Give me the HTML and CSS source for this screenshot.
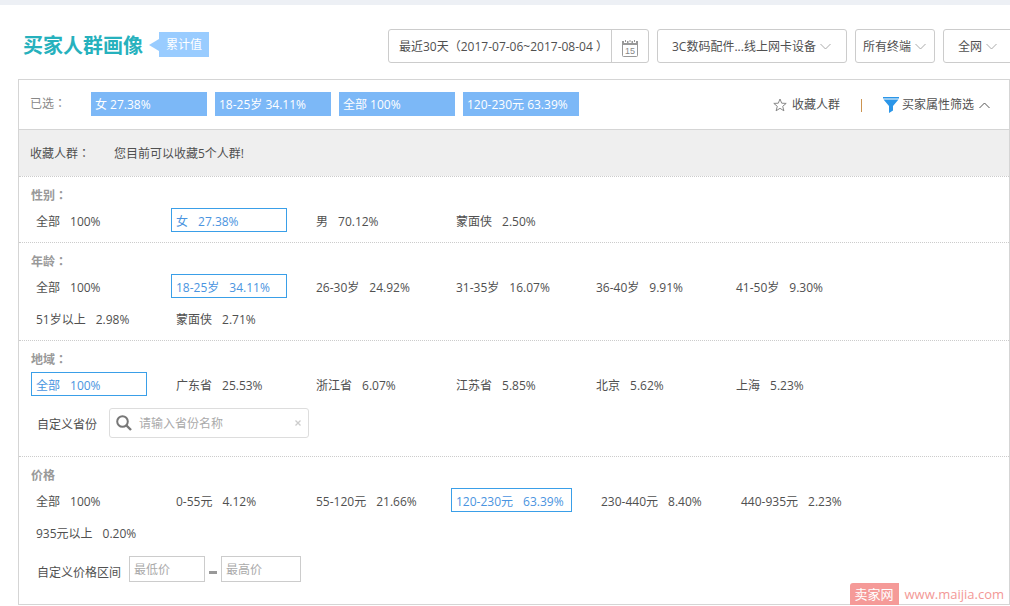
FILE: index.html
```html
<!DOCTYPE html>
<html lang="zh-CN">
<head>
<meta charset="utf-8">
<meta name="viewport" content="width=device-width, initial-scale=1">
<title>买家人群画像</title>
<link rel="stylesheet" href="styles.css">
</head>
<body>
<header class="header">
  <h1 class="title">买家人群画像</h1>
  <span class="flag">累计值</span>
  <div class="filters">
    <div class="date">
      <input class="date-input" type="text" aria-label="日期范围" value="最近30天（2017-07-06~2017-08-04 ）" readonly>
      <button class="date-button" type="button" aria-label="选择日期">
        <svg width="16" height="17" viewBox="0 0 16 17"><rect x="0.5" y="2.5" width="15" height="14" rx="1" fill="#fff" stroke="#999"/><path d="M0 1h16v4H0z" fill="#999"/><path d="M2 0h3v3H2zM6.500 0h3v3h-3zM11 0h3v3h-3z" fill="#fff"/><path d="M3.500 0v2M8 0v2M12.500 0v2" stroke="#999"/><text x="8" y="14" text-anchor="middle" class="date-day">15</text></svg>
      </button>
    </div>
    <div class="select select-category">
      <select aria-label="类目"><option>3C数码配件...线上网卡设备</option></select>
      <svg class="select-arrow" width="11" height="7" viewBox="0 0 11 7"><path d="M.5 1l5 5 5-5" fill="none" stroke="#aaa"/></svg>
    </div>
    <div class="select select-terminal">
      <select aria-label="终端"><option>所有终端</option></select>
      <svg class="select-arrow" width="11" height="7" viewBox="0 0 11 7"><path d="M.5 1l5 5 5-5" fill="none" stroke="#aaa"/></svg>
    </div>
    <div class="select select-network">
      <select aria-label="范围"><option>全网</option></select>
      <svg class="select-arrow" width="11" height="7" viewBox="0 0 11 7"><path d="M.5 1l5 5 5-5" fill="none" stroke="#aaa"/></svg>
    </div>
  </div>
</header>

<main class="panel">
  <div class="chosen">
    <span class="chosen-label">已选<span class="colon" lang="zh-TW">：</span></span>
    <div class="tags">
      <button class="tag" type="button">女 27.38%</button>
      <button class="tag" type="button">18-25岁 34.11%</button>
      <button class="tag" type="button">全部 100%</button>
      <button class="tag" type="button">120-230元 63.39%</button>
    </div>
    <div class="actions">
      <button class="action action-save" type="button">
        <svg width="14" height="14" viewBox="0 0 14 14"><path d="M7 1l1.700 4.200 4.500.2-3.500 2.900 1.200 4.500L7 10.300l-3.900 2.500 1.200-4.500L.8 5.400l4.500-.2z" fill="none" stroke="#888"/></svg>
        收藏人群
      </button>
      <span class="divider"></span>
      <button class="action action-filter" type="button">
        <svg width="16" height="16" viewBox="0 0 16 16"><path d="M0 0h16v1.500H0zM.5 2.500h15L10 9v4.500L6 16V9z" fill="#2b96e8"/></svg>
        买家属性筛选
        <svg class="action-arrow" width="11" height="7" viewBox="0 0 11 7"><path d="M.5 6l5-5 5 5" fill="none" stroke="#555"/></svg>
      </button>
    </div>
  </div>

  <p class="notice"><span class="notice-label">收藏人群<span class="colon" lang="zh-TW">：</span></span><span>您目前可以收藏5个人群!</span></p>

  <section class="group">
    <h2 class="group-title">性别<span class="colon" lang="zh-TW">：</span></h2>
    <div class="options">
      <button class="option" type="button"><span>全部</span><span>100%</span></button>
      <button class="option option-active" type="button"><span>女</span><span>27.38%</span></button>
      <button class="option" type="button"><span>男</span><span>70.12%</span></button>
      <button class="option" type="button"><span>蒙面侠</span><span>2.50%</span></button>
    </div>
  </section>

  <section class="group">
    <h2 class="group-title">年龄<span class="colon" lang="zh-TW">：</span></h2>
    <div class="options">
      <button class="option" type="button"><span>全部</span><span>100%</span></button>
      <button class="option option-active" type="button"><span>18-25岁</span><span>34.11%</span></button>
      <button class="option" type="button"><span>26-30岁</span><span>24.92%</span></button>
      <button class="option" type="button"><span>31-35岁</span><span>16.07%</span></button>
      <button class="option" type="button"><span>36-40岁</span><span>9.91%</span></button>
      <button class="option" type="button"><span>41-50岁</span><span>9.30%</span></button>
      <button class="option" type="button"><span>51岁以上</span><span>2.98%</span></button>
      <button class="option" type="button"><span>蒙面侠</span><span>2.71%</span></button>
    </div>
  </section>

  <section class="group">
    <h2 class="group-title">地域<span class="colon" lang="zh-TW">：</span></h2>
    <div class="options">
      <button class="option option-active" type="button"><span>全部</span><span>100%</span></button>
      <button class="option" type="button"><span>广东省</span><span>25.53%</span></button>
      <button class="option" type="button"><span>浙江省</span><span>6.07%</span></button>
      <button class="option" type="button"><span>江苏省</span><span>5.85%</span></button>
      <button class="option" type="button"><span>北京</span><span>5.62%</span></button>
      <button class="option" type="button"><span>上海</span><span>5.23%</span></button>
    </div>
    <div class="custom custom-province">
      <label for="province">自定义省份</label>
      <div class="search">
        <svg width="16" height="16" viewBox="0 0 16 16"><circle cx="6.500" cy="6.500" r="5.300" fill="none" stroke="#777" stroke-width="2"/><path d="M10.500 10.500l4.500 4.500" stroke="#777" stroke-width="2.400"/></svg>
        <input id="province" type="text" placeholder="请输入省份名称">
        <button class="search-clear" type="button" aria-label="清除"><svg width="6" height="6" viewBox="0 0 6 6"><path d="M.5.5l5 5M5.500.5l-5 5" stroke="#ccc" stroke-width="1.300"/></svg></button>
      </div>
    </div>
  </section>

  <section class="group">
    <h2 class="group-title">价格</h2>
    <div class="options">
      <button class="option" type="button"><span>全部</span><span>100%</span></button>
      <button class="option" type="button"><span>0-55元</span><span>4.12%</span></button>
      <button class="option" type="button"><span>55-120元</span><span>21.66%</span></button>
      <button class="option option-wide option-active" type="button"><span>120-230元</span><span>63.39%</span></button>
      <button class="option" type="button"><span>230-440元</span><span>8.40%</span></button>
      <button class="option" type="button"><span>440-935元</span><span>2.23%</span></button>
      <button class="option" type="button"><span>935元以上</span><span>0.20%</span></button>
    </div>
    <div class="custom custom-price">
      <label for="price-min">自定义价格区间</label>
      <input class="price price-min" id="price-min" type="text" placeholder="最低价">
      <span class="dash"></span>
      <input class="price price-max" type="text" placeholder="最高价" aria-label="最高价">
    </div>
  </section>
</main>

<div class="watermark"><span class="watermark-name">卖家网</span><span class="watermark-url">www.maijia.com</span></div>
</body>
</html>
```
FILE: styles.css
```css
* {
  box-sizing: border-box;
}

body {
  position: relative;
  margin: 0;
  border-top: 5px solid #edf0f5;
  background: #fff;
  color: #505050;
  font: 12px/20px "Open Sans", "Noto Sans CJK SC", sans-serif;
  overflow-x: hidden;
}

button,
input,
select {
  margin: 0;
  padding: 0;
  border: 0;
  border-radius: 0;
  background: none;
  color: inherit;
  font: inherit;
}

button {
  cursor: pointer;
}

svg {
  display: block;
  flex: none;
}

::placeholder {
  color: #aaa;
  opacity: 1;
}

.colon {
  font-family: "Noto Sans CJK TC", sans-serif;
  line-height: 12px;
}

.header {
  display: flex;
  align-items: center;
  height: 74px;
  padding: 8px 0 0 23px;
}

.title {
  flex: none;
  margin: 0;
  color: #26b1bd;
  font-size: 20px;
  line-height: 28px;
}

.flag {
  display: flex;
  flex: none;
  align-items: center;
  align-self: flex-start;
  gap: 7px;
  margin-top: 19px;
  margin-left: 6px;
  padding-right: 7px;
  background: linear-gradient(#9cf, #9cf) 10px 0 no-repeat;
  color: #fff;
  line-height: 25px;
}

.flag::before {
  content: "";
  border: solid transparent;
  border-width: 6px 10px 6px 0;
  border-right-color: #9cf;
}

.filters {
  display: flex;
  flex: none;
  gap: 8px;
  margin-right: -13px;
  margin-left: auto;
}

.date,
.select {
  display: flex;
  align-items: center;
  height: 34px;
  border: 1px solid #ccc;
  border-radius: 3px;
}

.date {
  width: 261px;
}

.date-input {
  flex: 1;
  min-width: 0;
  height: 100%;
  padding-left: 10px;
}

.date-button {
  display: flex;
  align-items: center;
  justify-content: center;
  width: 37px;
  height: 100%;
  padding-top: 4px;
  border-left: 1px solid #ccc;
}

.date-day {
  fill: #888;
  font: 9px "Liberation Sans", sans-serif;
}

.select {
  position: relative;
}

.select select {
  width: 100%;
  height: 100%;
  padding-top: 2px;
  appearance: none;
}

.select-arrow {
  position: absolute;
  right: 15px;
  pointer-events: none;
}

.select-category {
  width: 190px;
}

.select-category select,
.select-network select {
  padding-left: 14px;
}

.select-terminal,
.select-network {
  width: 80px;
}

.select-terminal select {
  padding-left: 7px;
}

.select-terminal .select-arrow {
  right: 8px;
}

.select-network .select-arrow {
  right: 25px;
}

.panel {
  margin-left: 18px;
  border: 1px solid #d5d5d5;
}

.chosen {
  display: flex;
  align-items: center;
  height: 50px;
  padding: 0 19px 1px 11px;
  border-bottom: 1px solid #d5d5d5;
}

.chosen-label {
  width: 61px;
  color: #888;
}

.tags {
  display: flex;
  gap: 8px;
}

.tag {
  min-width: 116px;
  height: 24px;
  padding: 1px 4px 0;
  background: #7cb8f7;
  color: #fff;
  text-align: left;
  white-space: nowrap;
}

.actions {
  display: flex;
  align-items: center;
  margin-left: auto;
  padding-top: 2px;
}

.action {
  display: flex;
  align-items: center;
  white-space: nowrap;
}

.action-save {
  gap: 5px;
}

.action-filter {
  gap: 3px;
}

.action-arrow {
  margin-left: 2px;
}

.divider {
  width: 1px;
  height: 13px;
  margin: 0 21px;
  background: #cc9450;
}

.notice {
  display: flex;
  margin: 0;
  padding: 14px 11px 12px;
  background: #efefef;
}

.notice-label {
  width: 84px;
}

.group {
  padding: 9px 12px 10px;
  border-top: 1px dotted #ccc;
}

.group-title {
  margin: 0 0 2px;
  color: #999;
  font-size: 12px;
  line-height: 20px;
}

.options {
  display: flex;
  flex-wrap: wrap;
  gap: 8px 24px;
  padding-right: 80px;
}

.option {
  display: flex;
  align-items: center;
  gap: 10px;
  min-width: 116px;
  height: 24px;
  padding: 3px 4px 0;
  border: 1px solid transparent;
  white-space: nowrap;
}

.option-wide {
  min-width: 121px;
}

.option-active {
  border-color: #3a9fe8;
  color: #4a94e0;
}

.custom {
  display: flex;
  margin-top: 12px;
  padding-left: 6px;
}

.custom-province {
  align-items: center;
  gap: 12px;
  margin-bottom: 8px;
}

.custom-province label {
  padding-top: 3px;
}

.search {
  display: flex;
  align-items: center;
  gap: 7px;
  width: 200px;
  height: 30px;
  padding: 0 7px 0 6px;
  border: 1px solid #ddd;
  border-radius: 3px;
}

.search input {
  flex: 1;
  min-width: 0;
  padding-top: 2px;
}

.custom-price {
  align-items: flex-end;
  gap: 4px;
  margin-bottom: 12px;
}

.custom-price label {
  margin-right: 4px;
  line-height: 18px;
}

.price {
  height: 26px;
  padding: 0 4px;
  border: 1px solid #ccc;
}

.price-min {
  width: 76px;
}

.price-max {
  width: 80px;
}

.dash {
  width: 8px;
  height: 3px;
  margin-bottom: 8px;
  background: #999;
}

.watermark {
  position: absolute;
  right: 6px;
  bottom: -1px;
  display: flex;
  gap: 6px;
  color: #f39896;
  font-size: 13px;
  line-height: 23px;
}

.watermark-name {
  padding: 0 5px;
  border-radius: 3px 0 0 0;
  background: #f59a98;
  color: #fff;
}
```
